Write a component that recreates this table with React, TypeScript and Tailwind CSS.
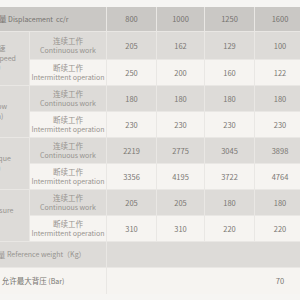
const cols = ["800", "1000", "1250", "1600"];

const groups = [
  {
    label: ["最高转速", "Rotating speed", "(rpm)"],
    cont: [205, 162, 129, 100],
    inter: [250, 200, 160, 122],
  },
  {
    label: ["流量 Flow", "(L/min)"],
    cont: [180, 180, 180, 180],
    inter: [230, 230, 230, 230],
  },
  {
    label: ["扭矩 Torque", "(N.m)"],
    cont: [2219, 2775, 3045, 3898],
    inter: [3356, 4195, 3722, 4764],
  },
  {
    label: ["压力 Pressure", "(Bar)"],
    cont: [205, 205, 180, 180],
    inter: [310, 310, 220, 220],
  },
];

function SubLabel({ cn, en }: { cn: string; en: string }) {
  return (
    <div className="flex flex-col items-center justify-center whitespace-nowrap text-[#96938f]">
      <span className="text-[7.5px] leading-[9px]">{cn}</span>
      <span className="text-[7px] leading-[10px]">{en}</span>
    </div>
  );
}

export default function App() {
  return (
    <div className="h-[300px] w-[300px] overflow-hidden bg-[#f6f5f3] pt-[7px] font-['Noto_Sans_CJK_SC',sans-serif]">
      <div className="-ml-[46px] grid w-[351px] grid-cols-[75px_76px_49px_47px_49px_50px] grid-rows-[24px_27px_25px_25px_25px_25px_25px_25px_25px_25px_26px] gap-px bg-[#e9e7e4] whitespace-nowrap text-[7.5px] text-[#7a7773]">
        {/* header */}
        <div className="col-span-2 flex items-center justify-center bg-[#cac8c5] text-[7px] text-[#75726f]">
          <span className="text-[7.5px]">排量</span>&nbsp;Displacement&nbsp;&nbsp;cc/r
        </div>
        {cols.map((c) => (
          <div key={c} className="flex items-center justify-center bg-[#cac8c5] text-[#75726f]">
            {c}
          </div>
        ))}

        {groups.map((g) => (
          <>
            <div className="row-span-2 flex flex-col items-center justify-center bg-[#dddbd8] text-[7px] leading-[9.5px] text-[#96938f]">
              {g.label.map((l) => (
                <span key={l}>{l}</span>
              ))}
            </div>
            <div className="flex items-center justify-center bg-[#dddbd8]">
              <SubLabel cn="连续工作" en="Continuous work" />
            </div>
            {g.cont.map((v, i) => (
              <div key={"c" + i} className="flex items-center justify-center bg-[#dddbd8]">
                {v}
              </div>
            ))}
            <div className="flex items-center justify-center bg-[#f6f4f1]">
              <SubLabel cn="断续工作" en="Intermittent operation" />
            </div>
            {g.inter.map((v, i) => (
              <div key={"i" + i} className="flex items-center justify-center bg-[#f6f4f1]">
                {v}
              </div>
            ))}
          </>
        ))}

        {/* weight */}
        <div className="col-span-2 flex items-center justify-center bg-[#dddbd8] pl-[16px] text-[7px] text-[#96938f]">
          <span className="text-[7.5px]">重量</span>&nbsp;Reference weight（Kg）
        </div>
        <div className="col-span-4 bg-[#dddbd8]" />

        {/* back pressure */}
        <div className="col-span-2 flex items-center justify-center bg-[#f6f4f1] pl-[6px] text-[#77746f]">
          允许最大背压&nbsp;<span className="text-[7px]">(Bar)</span>
        </div>
        <div className="col-span-4 flex items-center justify-end bg-[#f6f4f1]">
          <span className="w-[50px] text-center">70</span>
        </div>
      </div>
    </div>
  );
}
